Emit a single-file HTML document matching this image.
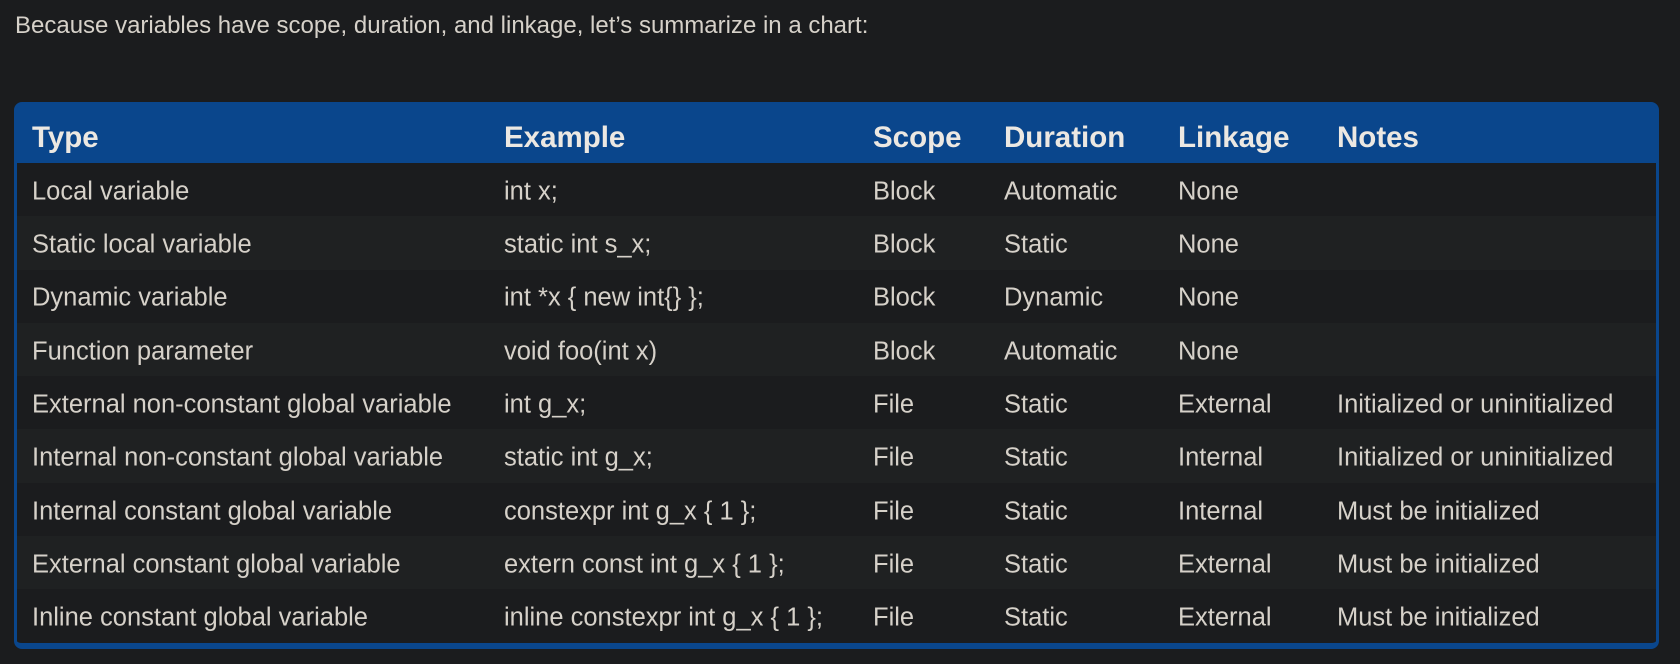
<!DOCTYPE html>
<html><head><meta charset="utf-8"><style>
html,body{margin:0;padding:0;background:#1b1c1e;width:1680px;height:664px;overflow:hidden;font-family:"Liberation Sans",sans-serif;color:#d6d1c9}
.intro{position:absolute;left:15px;top:12px;font-size:24px}
.tbl{position:absolute;left:14px;top:102px;width:1645px;height:547px;box-sizing:border-box;border:3px solid #0a468c;border-bottom-width:6px;border-radius:8px;background:#0a468c;overflow:hidden}
.hd{height:58px;position:relative;background:#0a468c;font-weight:bold;font-size:29.5px;color:#ece8e2}
.hd .c{top:57%}
.row{height:53.3px;position:relative;font-size:25.5px}
.row:nth-child(odd){background:#1b1c1e}
.row:nth-child(even){background:#1f2122}
.c{position:absolute;top:54%;transform:translateY(-50%);white-space:nowrap}
.c1{left:15px}.c2{left:487px}.c3{left:856px}.c4{left:987px}.c5{left:1161px}.c6{left:1320px}
</style></head><body>
<div class="intro">Because variables have scope, duration, and linkage, let’s summarize in a chart:</div>
<div class="tbl">
<div class="hd"><span class="c c1">Type</span><span class="c c2">Example</span><span class="c c3">Scope</span><span class="c c4">Duration</span><span class="c c5">Linkage</span><span class="c c6">Notes</span></div>
<div>
<div class="row"><span class="c c1">Local variable</span><span class="c c2">int x;</span><span class="c c3">Block</span><span class="c c4">Automatic</span><span class="c c5">None</span></div>
<div class="row"><span class="c c1">Static local variable</span><span class="c c2">static int s_x;</span><span class="c c3">Block</span><span class="c c4">Static</span><span class="c c5">None</span></div>
<div class="row"><span class="c c1">Dynamic variable</span><span class="c c2">int *x { new int{} };</span><span class="c c3">Block</span><span class="c c4">Dynamic</span><span class="c c5">None</span></div>
<div class="row"><span class="c c1">Function parameter</span><span class="c c2">void foo(int x)</span><span class="c c3">Block</span><span class="c c4">Automatic</span><span class="c c5">None</span></div>
<div class="row"><span class="c c1">External non-constant global variable</span><span class="c c2">int g_x;</span><span class="c c3">File</span><span class="c c4">Static</span><span class="c c5">External</span><span class="c c6">Initialized or uninitialized</span></div>
<div class="row"><span class="c c1">Internal non-constant global variable</span><span class="c c2">static int g_x;</span><span class="c c3">File</span><span class="c c4">Static</span><span class="c c5">Internal</span><span class="c c6">Initialized or uninitialized</span></div>
<div class="row"><span class="c c1">Internal constant global variable</span><span class="c c2">constexpr int g_x { 1 };</span><span class="c c3">File</span><span class="c c4">Static</span><span class="c c5">Internal</span><span class="c c6">Must be initialized</span></div>
<div class="row"><span class="c c1">External constant global variable</span><span class="c c2">extern const int g_x { 1 };</span><span class="c c3">File</span><span class="c c4">Static</span><span class="c c5">External</span><span class="c c6">Must be initialized</span></div>
<div class="row"><span class="c c1">Inline constant global variable</span><span class="c c2">inline constexpr int g_x { 1 };</span><span class="c c3">File</span><span class="c c4">Static</span><span class="c c5">External</span><span class="c c6">Must be initialized</span></div>
</div>
</div>
</body></html>
